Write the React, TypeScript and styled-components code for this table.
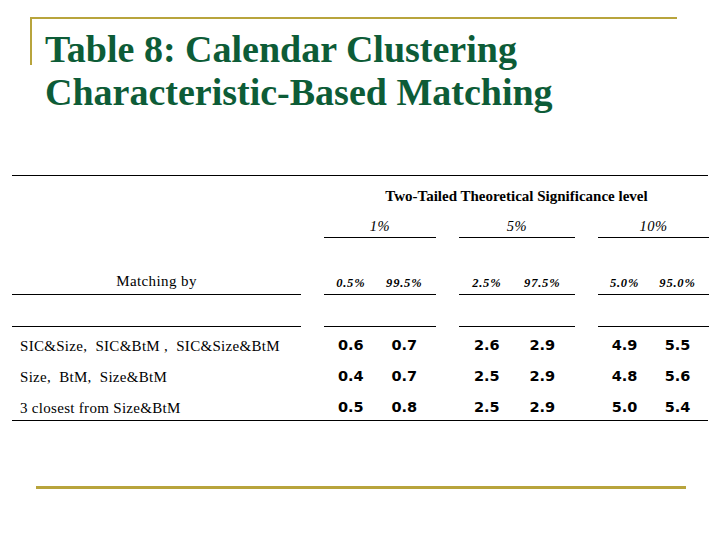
import styled, { createGlobalStyle } from "styled-components";

const GlobalStyle = createGlobalStyle`
  html, body {
    margin: 0;
    padding: 0;
    background: #fff;
  }
`;

const GOLD = "#b8a43c";
const COLUMNS = "289px 112px 116px 111px";

const groups = [
  { level: "1%", tails: ["0.5%", "99.5%"] },
  { level: "5%", tails: ["2.5%", "97.5%"] },
  { level: "10%", tails: ["5.0%", "95.0%"] },
];

const rows = [
  { label: "SIC&Size,  SIC&BtM ,  SIC&Size&BtM", values: ["0.6", "0.7", "2.6", "2.9", "4.9", "5.5"] },
  { label: "Size,  BtM,  Size&BtM", values: ["0.4", "0.7", "2.5", "2.9", "4.8", "5.6"] },
  { label: "3 closest from Size&BtM", values: ["0.5", "0.8", "2.5", "2.9", "5.0", "5.4"] },
];

const Slide = () => {
  return (
    <Page>
      <GlobalStyle />
      <Header>
        <Title>
          Table 8: Calendar Clustering
          <br />
          Characteristic-Based Matching
        </Title>
      </Header>

      <Table>
        <Row>
          <span />
          <Caption>Two-Tailed Theoretical Significance level</Caption>
        </Row>

        <Row>
          <span />
          {groups.map((g) => (
            <GroupLabel key={g.level}>{g.level}</GroupLabel>
          ))}
        </Row>

        <Row>
          <MatchHead>Matching by</MatchHead>
          {groups.map((g) => (
            <Pair key={g.level} $ruled>
              {g.tails.map((t) => (
                <TailLabel key={t}>{t}</TailLabel>
              ))}
            </Pair>
          ))}
        </Row>

        <Row>
          <RuleCell />
          <RuleCell />
          <RuleCell />
          <RuleCell />
        </Row>

        {rows.map((r) => (
          <Row key={r.label}>
            <RowLabel>{r.label}</RowLabel>
            {[0, 1, 2].map((i) => (
              <Pair key={i}>
                <Value>{r.values[i * 2]}</Value>
                <Value>{r.values[i * 2 + 1]}</Value>
              </Pair>
            ))}
          </Row>
        ))}
      </Table>

      <FooterRule />
    </Page>
  );
};

const Page = styled.div`
  width: 720px;
  height: 540px;
  background: #fff;
  overflow: hidden;
  display: flex;
  flex-direction: column;
`;

const Header = styled.header`
  position: relative;
  margin-left: 30px;
  width: 647px;
  padding-top: 28px;

  /* gold corner frame sitting behind the title */
  &::before {
    content: "";
    position: absolute;
    top: 17px;
    left: 0;
    width: 647px;
    height: 48px;
    border-top: 2px solid ${GOLD};
    border-left: 2px solid ${GOLD};
    box-sizing: border-box;
  }
`;

const Title = styled.h1`
  margin: 0;
  padding-left: 15px;
  font-family: "Liberation Serif", "Times New Roman", serif;
  font-weight: bold;
  font-size: 38px;
  line-height: 43px;
  color: #0d5c37;
`;

const Table = styled.div`
  margin-top: 61px;
  margin-left: 12px;
  width: 696px;
  border-top: 1px solid #000;
  border-bottom: 1px solid #000;
  font-family: "Liberation Serif", "Times New Roman", serif;
  color: #000;
`;

const Row = styled.div`
  display: grid;
  grid-template-columns: ${COLUMNS};
  column-gap: 23px;
`;

const Caption = styled.div`
  grid-column: 2 / 5;
  height: 34px;
  box-sizing: border-box;
  padding-top: 12px;
  text-align: center;
  font-weight: bold;
  font-size: 15px;
  line-height: 17px;
`;

const GroupLabel = styled.div`
  height: 28px;
  box-sizing: border-box;
  padding-top: 8px;
  border-bottom: 1px solid #000;
  text-align: center;
  font-style: italic;
  font-size: 14.5px;
  line-height: 16px;
  letter-spacing: 0.5px;
`;

const MatchHead = styled.div`
  height: 57px;
  box-sizing: border-box;
  padding-top: 35px;
  border-bottom: 1px solid #000;
  text-align: center;
  font-size: 15px;
  line-height: 17px;
  letter-spacing: 0.4px;
`;

const Pair = styled.div<{ $ruled?: boolean }>`
  display: grid;
  grid-template-columns: 1fr 1fr;
  padding-right: 5px;
  box-sizing: border-box;
  height: ${(p) => (p.$ruled ? "57px" : "31px")};
  padding-top: ${(p) => (p.$ruled ? "37px" : "9px")};
  border-bottom: ${(p) => (p.$ruled ? "1px solid #000" : "none")};
`;

const TailLabel = styled.span`
  text-align: center;
  font-style: italic;
  font-weight: bold;
  font-size: 12.5px;
  line-height: 16px;
  letter-spacing: 0.8px;
`;

const RuleCell = styled.div`
  height: 31px;
  border-bottom: 1px solid #000;
`;

const RowLabel = styled.div`
  height: 31px;
  box-sizing: border-box;
  padding: 10px 0 0 8px;
  font-size: 15px;
  line-height: 18px;
  letter-spacing: 0.3px;
  white-space: pre;
`;

const Value = styled.span`
  text-align: center;
  font-family: "DejaVu Sans", Verdana, sans-serif;
  font-weight: bold;
  font-size: 14.5px;
  line-height: 18px;
`;

const FooterRule = styled.div`
  margin: 65px 0 0 36px;
  width: 650px;
  height: 3px;
  background: ${GOLD};
`;

export default Slide;
